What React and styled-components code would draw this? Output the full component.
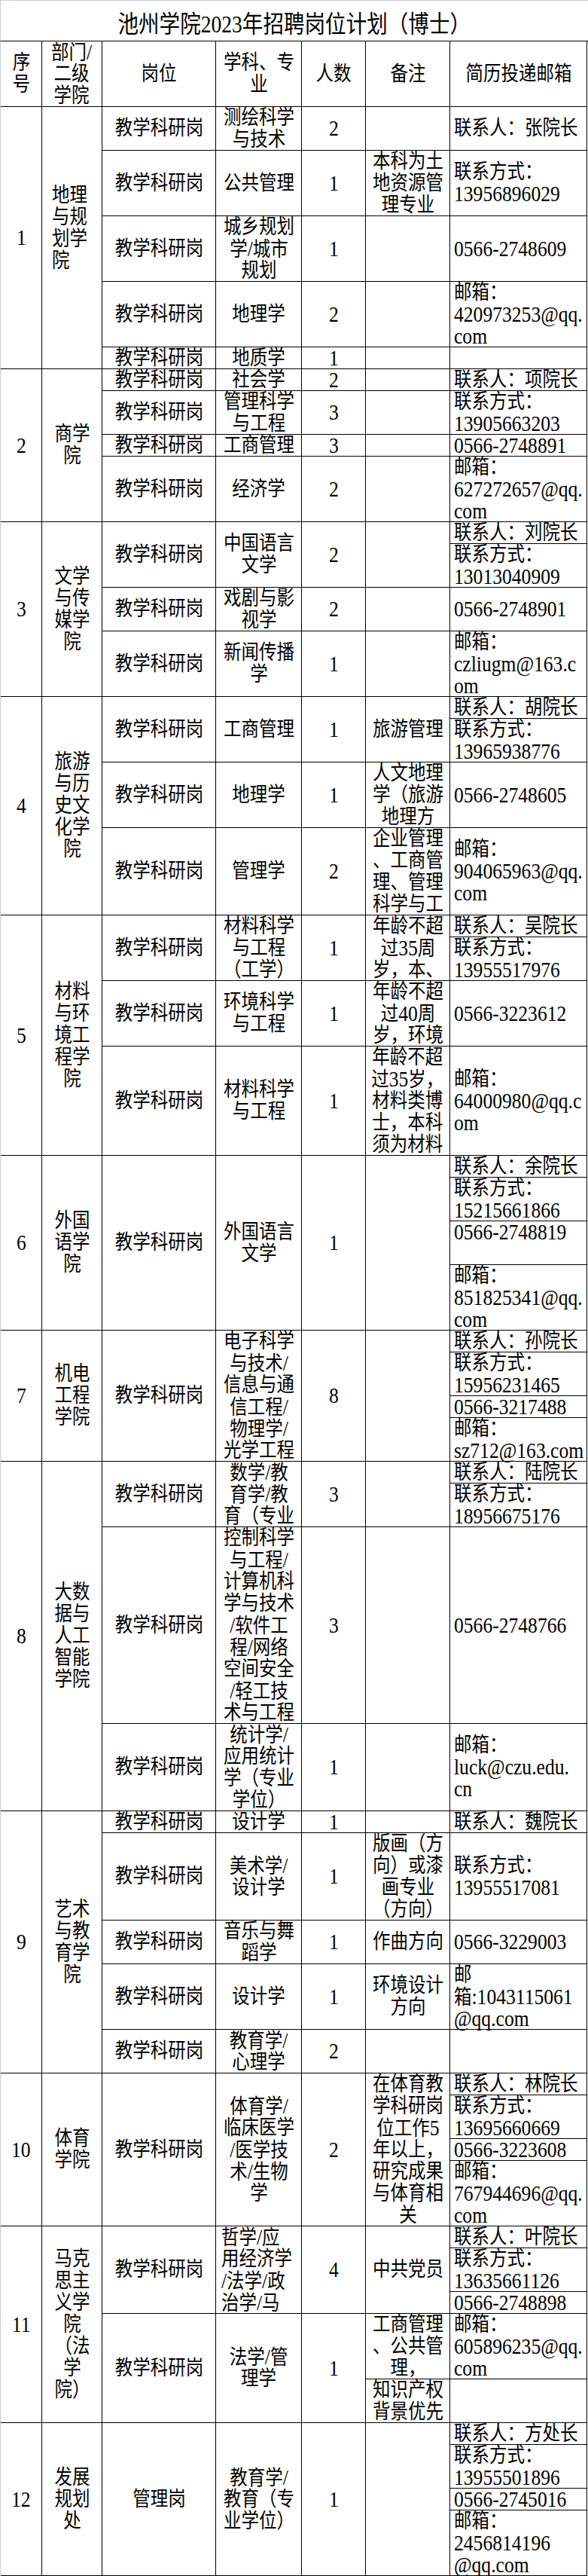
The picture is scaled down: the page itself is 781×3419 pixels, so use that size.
import React from 'react';
import styled, { createGlobalStyle } from 'styled-components';

const UNIT = 29;
// the sheet's Song face is taller than wide: draw a larger face and narrow it
const NARROW = 0.87;

const GlobalStyle = createGlobalStyle`
  html, body {
    margin: 0;
    padding: 0;
    background: #ffffff;
  }
  body {
    font-family: "Liberation Serif", "Noto Sans CJK SC", serif;
    color: #000000;
  }
`;

const Page = styled.div`
  width: 781px;
`;

const Title = styled.div`
  height: 54px;
  box-sizing: border-box;
  border-top: 1px solid #c9cdd4;
  border-left: 1px solid #c9cdd4;
  display: flex;
  align-items: center;
  justify-content: center;
  padding-top: 3px;
  font-size: 31.5px;
  white-space: nowrap;
`;

const TitleText = styled.span`
  display: inline-block;
  transform: scaleX(0.875);
`;

const Grid = styled.div`
  display: grid;
  grid-template-columns: 55px 80px 151px 114px 85px 112px 182px;
  grid-template-rows: repeat(116, ${UNIT}px);
  border-top: 1px solid #000000;
  border-left: 1px solid #c9cdd4;
  font-size: 27px;
  line-height: ${UNIT}px;
`;

const Cell = styled.div`
  grid-column: ${(p) => p.$col};
  grid-row: ${(p) => p.$row} / span ${(p) => p.$span};
  box-sizing: border-box;
  border-right: 1px solid #000000;
  border-bottom: 1px solid #000000;
  display: flex;
  align-items: ${(p) => (p.$top ? 'flex-start' : 'center')};
  justify-content: ${(p) => (p.$left ? 'flex-start' : 'center')};
  padding-left: ${(p) => p.$pad || 0}px;
  padding-bottom: ${(p) => (p.$lift || 0) * 2}px;
  min-width: 0;
`;

const Lines = styled.div`
  flex-shrink: 0;
  text-align: ${(p) => p.$align || 'center'};
  transform: scaleX(${NARROW});
  transform-origin: ${(p) => (p.$align === 'left' ? 'left' : 'center')} center;
`;

const Line = styled.div`
  height: ${UNIT}px;
  white-space: nowrap;
`;

const Latin = styled.span`
  font-size: 1.09em;
`;

function splitLatin(text) {
  return text.split(/([\x20-\x7E]+)/).map((part, i) =>
    /^[\x20-\x7E]+$/.test(part) ? <Latin key={i}>{part}</Latin> : part
  );
}

function Text({ lines, align }) {
  return (
    <Lines $align={align}>
      {lines.map((line, i) => (
        <Line key={i}>{splitLatin(line)}</Line>
      ))}
    </Lines>
  );
}

const r = (span, major, num, post = '教学科研岗', align) => ({ span, major, num, post, align });
const c = (span, ...lines) => ({ span, lines });
const top = (item) => ({ ...item, top: true });

const header = [
  ['序', '号'],
  ['部门/', '二级', '学院'],
  ['岗位'],
  ['学科、专', '业'],
  ['人数'],
  ['备注'],
  ['简历投递邮箱'],
];

const sections = [
  {
    no: '1',
    dept: ['地理', '与规', '划学', '院'],
    deptAlign: 'left',
    deptLift: 13,
    rows: [
      r(2, ['测绘科学', '与技术'], '2'),
      r(3, ['公共管理'], '1'),
      r(3, ['城乡规划', '学/城市', '规划'], '1'),
      r(3, ['地理学'], '2'),
      r(1, ['地质学'], '1'),
    ],
    notes: [c(2), c(3, '本科为土', '地资源管', '理专业'), c(3), c(3), c(1)],
    contacts: [
      c(2, '联系人：张院长'),
      c(3, '联系方式：', '13956896029'),
      c(3, '0566-2748609'),
      c(3, '邮箱：', '420973253@qq.', 'com'),
      c(1),
    ],
  },
  {
    no: '2',
    dept: ['商学', '院'],
    rows: [
      r(1, ['社会学'], '2'),
      r(2, ['管理科学', '与工程'], '3'),
      r(1, ['工商管理'], '3'),
      r(3, ['经济学'], '2'),
    ],
    notes: [c(1), c(2), c(1), c(3)],
    contacts: [
      c(1, '联系人：项院长'),
      c(2, '联系方式：', '13905663203'),
      c(1, '0566-2748891'),
      c(3, '邮箱：', '627272657@qq.', 'com'),
    ],
  },
  {
    no: '3',
    dept: ['文学', '与传', '媒学', '院'],
    rows: [
      r(3, ['中国语言', '文学'], '2'),
      r(2, ['戏剧与影', '视学'], '2'),
      r(3, ['新闻传播', '学'], '1'),
    ],
    notes: [c(3), c(2), c(3)],
    contacts: [
      c(1, '联系人：刘院长'),
      c(2, '联系方式：', '13013040909'),
      c(2, '0566-2748901'),
      c(3, '邮箱：', 'czliugm@163.c', 'om'),
    ],
  },
  {
    no: '4',
    dept: ['旅游', '与历', '史文', '化学', '院'],
    rows: [
      r(3, ['工商管理'], '1'),
      r(3, ['地理学'], '1'),
      r(4, ['管理学'], '2'),
    ],
    notes: [
      c(3, '旅游管理'),
      c(3, '人文地理', '学（旅游', '地理方'),
      c(4, '企业管理', '、工商管', '理、管理', '科学与工'),
    ],
    contacts: [
      c(1, '联系人：胡院长'),
      c(2, '联系方式：', '13965938776'),
      c(3, '0566-2748605'),
      c(4, '邮箱：', '904065963@qq.', 'com'),
    ],
  },
  {
    no: '5',
    dept: ['材料', '与环', '境工', '程学', '院'],
    rows: [
      r(3, ['材料科学', '与工程', '（工学）'], '1'),
      r(3, ['环境科学', '与工程'], '1'),
      r(5, ['材料科学', '与工程'], '1'),
    ],
    notes: [
      c(3, '年龄不超', '过35周', '岁，本、'),
      c(3, '年龄不超', '过40周', '岁，环境'),
      c(5, '年龄不超', '过35岁，', '材料类博', '士，本科', '须为材料'),
    ],
    contacts: [
      c(1, '联系人：吴院长'),
      c(2, '联系方式：', '13955517976'),
      c(3, '0566-3223612'),
      c(5, '邮箱：', '64000980@qq.c', 'om'),
    ],
  },
  {
    no: '6',
    dept: ['外国', '语学', '院'],
    rows: [r(8, ['外国语言', '文学'], '1')],
    notes: [c(8)],
    contacts: [
      c(1, '联系人：余院长'),
      c(2, '联系方式：', '15215661866'),
      top(c(2, '0566-2748819')),
      c(3, '邮箱：', '851825341@qq.', 'com'),
    ],
  },
  {
    no: '7',
    dept: ['机电', '工程', '学院'],
    rows: [r(6, ['电子科学', '与技术/', '信息与通', '信工程/', '物理学/', '光学工程'], '8')],
    notes: [c(6)],
    contacts: [
      c(1, '联系人：孙院长'),
      c(2, '联系方式：', '15956231465'),
      c(1, '0566-3217488'),
      c(2, '邮箱：', 'sz712@163.com'),
    ],
  },
  {
    no: '8',
    dept: ['大数', '据与', '人工', '智能', '学院'],
    rows: [
      r(3, ['数学/教', '育学/教', '育（专业'], '3'),
      r(
        9,
        ['控制科学', '与工程/', '计算机科', '学与技术', '/软件工', '程/网络', '空间安全', '/轻工技', '术与工程'],
        '3'
      ),
      r(4, ['统计学/', '应用统计', '学（专业', '学位）'], '1'),
    ],
    notes: [c(3), c(9), c(4)],
    contacts: [
      c(1, '联系人：陆院长'),
      c(2, '联系方式：', '18956675176'),
      c(9, '0566-2748766'),
      c(4, '邮箱：', 'luck@czu.edu.', 'cn'),
    ],
  },
  {
    no: '9',
    dept: ['艺术', '与教', '育学', '院'],
    rows: [
      r(1, ['设计学'], '1'),
      r(4, ['美术学/', '设计学'], '1'),
      r(2, ['音乐与舞', '蹈学'], '1'),
      r(3, ['设计学'], '1'),
      r(2, ['教育学/', '心理学'], '2'),
    ],
    notes: [
      c(1),
      c(4, '版画（方', '向）或漆', '画专业', '（方向）'),
      c(2, '作曲方向'),
      c(3, '环境设计', '方向'),
      c(2),
    ],
    contacts: [
      c(1, '联系人：魏院长'),
      c(4, '联系方式：', '13955517081'),
      c(2, '0566-3229003'),
      c(3, '邮', '箱:1043115061', '@qq.com'),
      c(2),
    ],
  },
  {
    no: '10',
    dept: ['体育', '学院'],
    rows: [r(7, ['体育学/', '临床医学', '/医学技', '术/生物', '学'], '2')],
    notes: [c(7, '在体育教', '学科研岗', '位工作5', '年以上，', '研究成果', '与体育相', '关')],
    contacts: [
      c(1, '联系人：林院长'),
      c(2, '联系方式：', '13695660669'),
      c(1, '0566-3223608'),
      c(3, '邮箱：', '767944696@qq.', 'com'),
    ],
  },
  {
    no: '11',
    dept: ['马克', '思主', '义学', '院', '（法', '学', '院）'],
    rows: [
      r(4, ['哲学/应', '用经济学', '/法学/政', '治学/马'], '4', '教学科研岗', 'left'),
      r(5, ['法学/管', '理学'], '1'),
    ],
    notes: [c(4, '中共党员'), c(3, '工商管理', '、公共管', '理，'), c(2, '知识产权', '背景优先')],
    contacts: [
      c(1, '联系人：叶院长'),
      c(2, '联系方式：', '13635661126'),
      c(1, '0566-2748898'),
      c(3, '邮箱：', '605896235@qq.', 'com'),
      c(2),
    ],
  },
  {
    no: '12',
    dept: ['发展', '规划', '处'],
    rows: [r(7, ['教育学/', '教育（专', '业学位）'], '1', '管理岗')],
    notes: [c(7)],
    contacts: [
      c(1, '联系人：方处长'),
      c(2, '联系方式：', '13955501896'),
      c(1, '0566-2745016'),
      c(3, '邮箱：', '2456814196', '@qq.com'),
    ],
  },
];

function withStarts(list, start) {
  let y = start;
  return list.map((item) => {
    const placed = { ...item, row: y };
    y += item.span;
    return placed;
  });
}

function SectionCells({ s, start, total }) {
  const rows = withStarts(s.rows, start);
  const notes = withStarts(s.notes, start);
  const contacts = withStarts(s.contacts, start);
  return (
    <>
      <Cell $col={1} $row={start} $span={total}>
        <Text lines={[s.no]} />
      </Cell>
      <Cell $col={2} $row={start} $span={total} $lift={s.deptLift}>
        <Text lines={s.dept} align={s.deptAlign} />
      </Cell>
      {rows.map((row, i) => (
        <React.Fragment key={'r' + i}>
          <Cell $col={3} $row={row.row} $span={row.span}>
            <Text lines={[row.post]} />
          </Cell>
          <Cell
            $col={4}
            $row={row.row}
            $span={row.span}
            $left={row.align === 'left'}
            $pad={row.align === 'left' ? 7 : 0}
          >
            <Text lines={row.major} align={row.align} />
          </Cell>
          <Cell $col={5} $row={row.row} $span={row.span}>
            <Text lines={[row.num]} />
          </Cell>
        </React.Fragment>
      ))}
      {notes.map((note, i) => (
        <Cell key={'n' + i} $col={6} $row={note.row} $span={note.span}>
          <Text lines={note.lines} />
        </Cell>
      ))}
      {contacts.map((item, i) => (
        <Cell key={'c' + i} $col={7} $row={item.row} $span={item.span} $left $pad={5} $top={item.top}>
          <Text lines={item.lines} align="left" />
        </Cell>
      ))}
    </>
  );
}

export default function App() {
  let cursor = 4;
  const placed = sections.map((s) => {
    const total = s.rows.reduce((sum, row) => sum + row.span, 0);
    const start = cursor;
    cursor += total;
    return { s, start, total };
  });

  return (
    <Page>
      <GlobalStyle />
      <Title>
        <TitleText>池州学院2023年招聘岗位计划（博士）</TitleText>
      </Title>
      <Grid>
        {header.map((lines, i) => (
          <Cell key={'h' + i} $col={i + 1} $row={1} $span={3}>
            <Text lines={lines} />
          </Cell>
        ))}
        {placed.map(({ s, start, total }) => (
          <SectionCells key={s.no} s={s} start={start} total={total} />
        ))}
      </Grid>
    </Page>
  );
}
